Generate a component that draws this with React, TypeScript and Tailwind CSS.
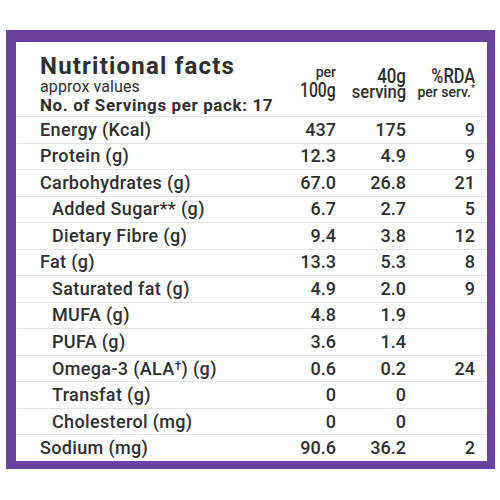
import React from "react";

type Row = { label: React.ReactNode; key: string; a: string; b: string; c: string; indent?: boolean };

const rows: Row[] = [
  { key: "e", label: "Energy (Kcal)", a: "437", b: "175", c: "9" },
  { key: "p", label: "Protein (g)", a: "12.3", b: "4.9", c: "9" },
  { key: "c", label: "Carbohydrates (g)", a: "67.0", b: "26.8", c: "21" },
  { key: "s", label: "Added Sugar** (g)", a: "6.7", b: "2.7", c: "5", indent: true },
  { key: "d", label: "Dietary Fibre (g)", a: "9.4", b: "3.8", c: "12", indent: true },
  { key: "f", label: "Fat (g)", a: "13.3", b: "5.3", c: "8" },
  { key: "sf", label: "Saturated fat (g)", a: "4.9", b: "2.0", c: "9", indent: true },
  { key: "m", label: "MUFA (g)", a: "4.8", b: "1.9", c: "", indent: true },
  { key: "pu", label: "PUFA (g)", a: "3.6", b: "1.4", c: "", indent: true },
  {
    key: "o",
    label: (
      <>
        Omega-3 (ALA<span className="text-[12px] align-[5px] leading-none">{"\u2020"}</span>) (g)
      </>
    ),
    a: "0.6",
    b: "0.2",
    c: "24",
    indent: true,
  },
  { key: "t", label: "Transfat (g)", a: "0", b: "0", c: "", indent: true },
  { key: "ch", label: "Cholesterol (mg)", a: "0", b: "0", c: "", indent: true },
  { key: "so", label: "Sodium (mg)", a: "90.6", b: "36.2", c: "2" },
];

export default function App() {
  return (
    <div
      className="w-[500px] h-[500px] bg-white pt-[30px] pl-[6px] text-[#2f2f2f]"
      style={{ fontFamily: "Roboto, 'Noto Sans', sans-serif" }}
    >
      <div className="w-[489px] h-[439px] border-l-[10px] border-t-[12px] border-r-[8px] border-b-[8px] border-[#6a40a0] flex flex-col">
        {/* header */}
        <div className="h-[74px] shrink-0 grid grid-cols-[minmax(0,1fr)_70px_70px_69px] pl-[24px] pr-[12px]">
          <div className="pt-[12px]">
            <div className="text-[24px] leading-[24px] font-bold tracking-[1.2px] whitespace-nowrap">Nutritional facts</div>
            <div className="text-[16px] leading-[18px] tracking-[0.1px]">approx values</div>
            <div className="text-[17px] leading-[18px] font-bold tracking-[0.6px] whitespace-nowrap">
              No. of Servings per pack: 17
            </div>
          </div>
          <div className="flex flex-col items-end pt-[23px]">
            <div className="text-[14px] leading-[15px] font-medium">per</div>
            <div className="text-[21px] leading-[20px] font-medium scale-x-[0.75] origin-right">100g</div>
          </div>
          <div className="flex flex-col items-end pt-[28px]">
            <div className="text-[21px] leading-[12px] font-medium scale-x-[0.8] origin-right">40g</div>
            <div className="text-[18px] leading-[20px] font-medium scale-x-[0.92] origin-right">serving</div>
          </div>
          <div className="flex flex-col items-end pt-[28px]">
            <div className="text-[21px] leading-[12px] font-medium scale-x-[0.78] origin-right">%RDA</div>
            <div className="text-[14px] leading-[20px] font-medium whitespace-nowrap">
              per serv.<span className="text-[9px] align-[6px] leading-none">*</span>
            </div>
          </div>
        </div>
        {/* rows */}
        <div className="flex-1 flex flex-col">
          {rows.map((r) => (
            <div
              key={r.key}
              className="flex-1 grid grid-cols-[minmax(0,1fr)_70px_70px_69px] items-center border-t border-[#e3e3e3] pl-[24px] pr-[12px] text-[18px] leading-none font-medium"
            >
              <div className={r.indent ? "pl-[12px] tracking-[0.35px]" : "tracking-[0.35px]"}>{r.label}</div>
              <div className="text-right">{r.a}</div>
              <div className="text-right">{r.b}</div>
              <div className="text-right">{r.c}</div>
            </div>
          ))}
        </div>
      </div>
    </div>
  );
}
